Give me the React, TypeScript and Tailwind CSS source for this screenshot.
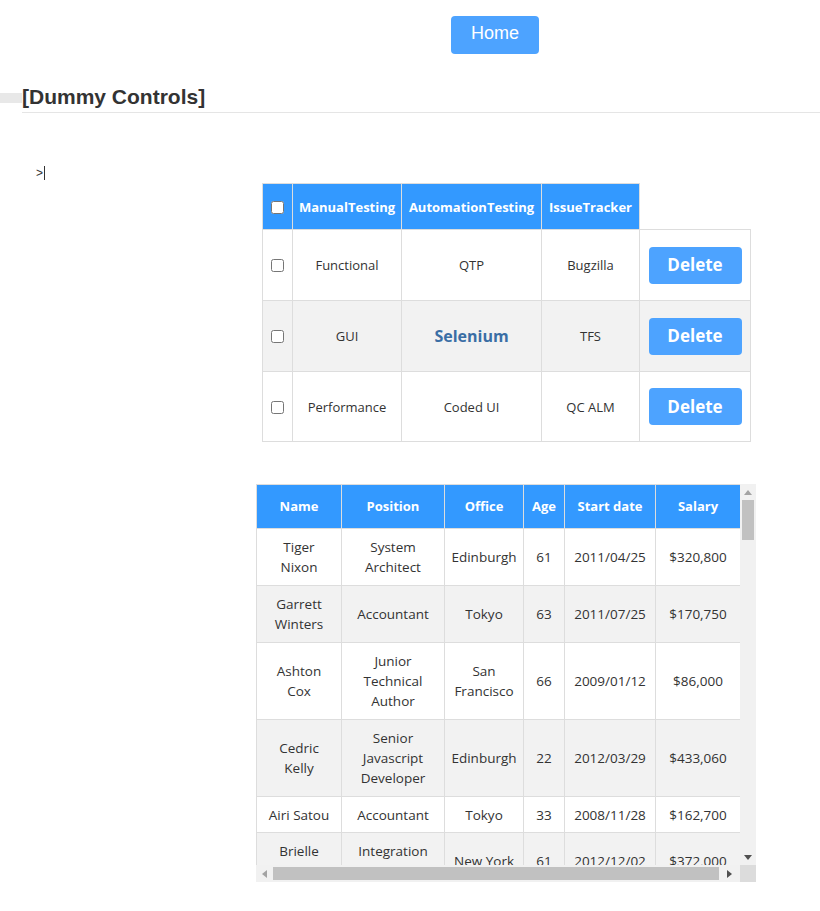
import React from "react";

const font = { fontFamily: '"Open Sans", "Noto Sans", sans-serif' };

type Row = { name: string[]; pos: string[]; office: string[]; age: string; date: string; salary: string; h: string };

const rows: Row[] = [
  { name: ["Tiger", "Nixon"], pos: ["System", "Architect"], office: ["Edinburgh"], age: "61", date: "2011/04/25", salary: "$320,800", h: "h-[57px]" },
  { name: ["Garrett", "Winters"], pos: ["Accountant"], office: ["Tokyo"], age: "63", date: "2011/07/25", salary: "$170,750", h: "h-[57px]" },
  { name: ["Ashton", "Cox"], pos: ["Junior", "Technical", "Author"], office: ["San", "Francisco"], age: "66", date: "2009/01/12", salary: "$86,000", h: "h-[77px]" },
  { name: ["Cedric", "Kelly"], pos: ["Senior", "Javascript", "Developer"], office: ["Edinburgh"], age: "22", date: "2012/03/29", salary: "$433,060", h: "h-[77px]" },
  { name: ["Airi Satou"], pos: ["Accountant"], office: ["Tokyo"], age: "33", date: "2008/11/28", salary: "$162,700", h: "h-[36px]" },
  { name: ["Brielle", "Williamson"], pos: ["Integration", "Specialist"], office: ["New York"], age: "61", date: "2012/12/02", salary: "$372,000", h: "h-[57px]" },
  { name: ["Herrod", "Chandler"], pos: ["Sales", "Assistant"], office: ["San", "Francisco"], age: "59", date: "2012/08/06", salary: "$137,500", h: "h-[57px]" },
];

function Lines({ l }: { l: string[] }) {
  return (
    <>
      {l.map((t, i) => (
        <React.Fragment key={i}>
          {i > 0 && <br />}
          {t}
        </React.Fragment>
      ))}
    </>
  );
}

export default function App() {
  const td1 = "border border-[#dddddd] text-center text-[13px] text-[#333333] p-0";
  const td1t = "border border-[#dddddd] text-center text-[13px] text-[#333333] p-0 pt-[2px]";
  const th2 = "border border-[#dddddd] bg-[#3399ff] text-white font-bold text-[13px] text-center p-0";
  const td2 = "border border-[#dddddd] text-center text-[13.5px] leading-[20px] text-[#333333] px-1 py-0";
  return (
    <div className="w-[820px] h-[911px] bg-white relative overflow-hidden">
      <div className="pt-[16px] pl-[451px]">
        <button
          className="w-[88px] h-[38px] pb-[3px] bg-[#4da3ff] rounded-[4px] text-white text-[18px] flex items-center justify-center"
          style={{ fontFamily: '"Liberation Sans", Arial, sans-serif' }}
        >
          Home
        </button>
      </div>

      <div className="mt-[31px] flex items-center">
        <div className="w-[22px] h-[10px] bg-[#e8e8e8] mt-[2px]" />
        <h2
          className="text-[21px] font-bold leading-[24px] text-[#333333]"
          style={{ fontFamily: '"Liberation Sans", Arial, sans-serif' }}
        >
          [Dummy Controls]
        </h2>
      </div>
      <div className="ml-[22px] mt-[3px] h-px bg-[#e5e5e5]" />

      <div className="mt-[53px] pl-[36px] flex items-center h-[14px] text-[12px] text-[#333333]" style={{ fontFamily: '"Liberation Sans", Arial, sans-serif' }}>
        <span className="leading-[14px]">&gt;</span>
        <span className="inline-block w-px h-[14px] bg-[#333333] ml-[1px]" />
      </div>

      <div className="mt-[3px] pl-[262px]" style={font}>
        <table className="border-collapse table-fixed w-[488px]">
          <colgroup>
            <col className="w-[30px]" />
            <col className="w-[109px]" />
            <col className="w-[140px]" />
            <col className="w-[98px]" />
            <col className="w-[111px]" />
          </colgroup>
          <thead>
            <tr className="h-[46px]">
              <th className="border border-[#dddddd] bg-[#3399ff] p-0">
                <input type="checkbox" className="w-[13px] h-[13px] m-0 mb-[1px] align-middle" />
              </th>
              <th className="border border-[#dddddd] bg-[#3399ff] text-white font-bold text-[13px] p-0 pt-[2px]">ManualTesting</th>
              <th className="border border-[#dddddd] bg-[#3399ff] text-white font-bold text-[13px] p-0 pt-[2px]">AutomationTesting</th>
              <th className="border border-[#dddddd] bg-[#3399ff] text-white font-bold text-[13px] p-0 pt-[2px]">IssueTracker</th>
              <th className="border-0 p-0"></th>
            </tr>
          </thead>
          <tbody>
            {[
              { a: "Functional", b: "QTP", c: "Bugzilla", bg: "bg-white", sel: false, h: "h-[71px]" },
              { a: "GUI", b: "Selenium", c: "TFS", bg: "bg-[#f2f2f2]", sel: true, h: "h-[71px]" },
              { a: "Performance", b: "Coded UI", c: "QC ALM", bg: "bg-white", sel: false, h: "h-[70px]" },
            ].map((r, i) => (
              <tr key={i} className={`${r.h} ${r.bg}`}>
                <td className={td1}>
                  <input type="checkbox" className="w-[13px] h-[13px] m-0 align-middle" />
                </td>
                <td className={td1t}>{r.a}</td>
                <td className={r.sel ? td1 : td1t}>
                  {r.sel ? (
                    <span className="text-[16px] font-bold text-[#3a6ea5]">{r.b}</span>
                  ) : (
                    r.b
                  )}
                </td>
                <td className={td1t}>{r.c}</td>
                <td className={td1}>
                  <button className="w-[93px] h-[37px] bg-[#4da3ff] rounded-[4px] text-white font-bold text-[17px] mx-auto flex items-center justify-center">
                    Delete
                  </button>
                </td>
              </tr>
            ))}
          </tbody>
        </table>
      </div>

      <div className="mt-[42px] ml-[256px] w-[500px]" style={font}>
        <div className="flex h-[381px]">
          <div className="w-[484px] h-[381px] overflow-hidden">
            <table className="border-collapse table-fixed w-[484px]">
              <colgroup>
                <col className="w-[85px]" />
                <col className="w-[103px]" />
                <col className="w-[79px]" />
                <col className="w-[41px]" />
                <col className="w-[91px]" />
                <col className="w-[85px]" />
              </colgroup>
              <thead>
                <tr className="h-[44px]">
                  <th className={th2}>Name</th>
                  <th className={th2}>Position</th>
                  <th className={th2}>Office</th>
                  <th className={th2}>Age</th>
                  <th className={th2}>Start date</th>
                  <th className={th2}>Salary</th>
                </tr>
              </thead>
              <tbody>
                {rows.map((r, i) => (
                  <tr key={i} className={`${r.h} ${i % 2 === 1 ? "bg-[#f2f2f2]" : "bg-white"}`}>
                    <td className={td2}><Lines l={r.name} /></td>
                    <td className={td2}><Lines l={r.pos} /></td>
                    <td className={td2}><Lines l={r.office} /></td>
                    <td className={td2}>{r.age}</td>
                    <td className={td2}>{r.date}</td>
                    <td className={td2}>{r.salary}</td>
                  </tr>
                ))}
              </tbody>
            </table>
          </div>
          <div className="w-[16px] h-[381px] bg-[#f1f1f1] flex flex-col items-center">
            <div className="h-[16px] w-full flex items-center justify-center">
              <svg width="8" height="5" viewBox="0 0 8 5"><polygon points="4,0 8,5 0,5" fill="#a3a3a3" /></svg>
            </div>
            <div className="w-[12px] h-[40px] bg-[#c1c1c1]" />
            <div className="flex-1" />
            <div className="h-[16px] w-full flex items-center justify-center">
              <svg width="8" height="5" viewBox="0 0 8 5"><polygon points="0,0 8,0 4,5" fill="#505050" /></svg>
            </div>
          </div>
        </div>
        <div className="flex h-[17px]">
          <div className="w-[484px] h-[17px] bg-[#f1f1f1] flex items-center">
            <div className="w-[17px] h-full flex items-center justify-center">
              <svg width="5" height="8" viewBox="0 0 5 8"><polygon points="5,0 5,8 0,4" fill="#a3a3a3" /></svg>
            </div>
            <div className="w-[446px] h-[13px] bg-[#c1c1c1]" />
            <div className="flex-1 h-full flex items-center justify-center">
              <svg width="5" height="8" viewBox="0 0 5 8"><polygon points="0,0 5,4 0,8" fill="#505050" /></svg>
            </div>
          </div>
          <div className="w-[16px] h-[17px] bg-[#dcdcdc]" />
        </div>
      </div>
    </div>
  );
}
